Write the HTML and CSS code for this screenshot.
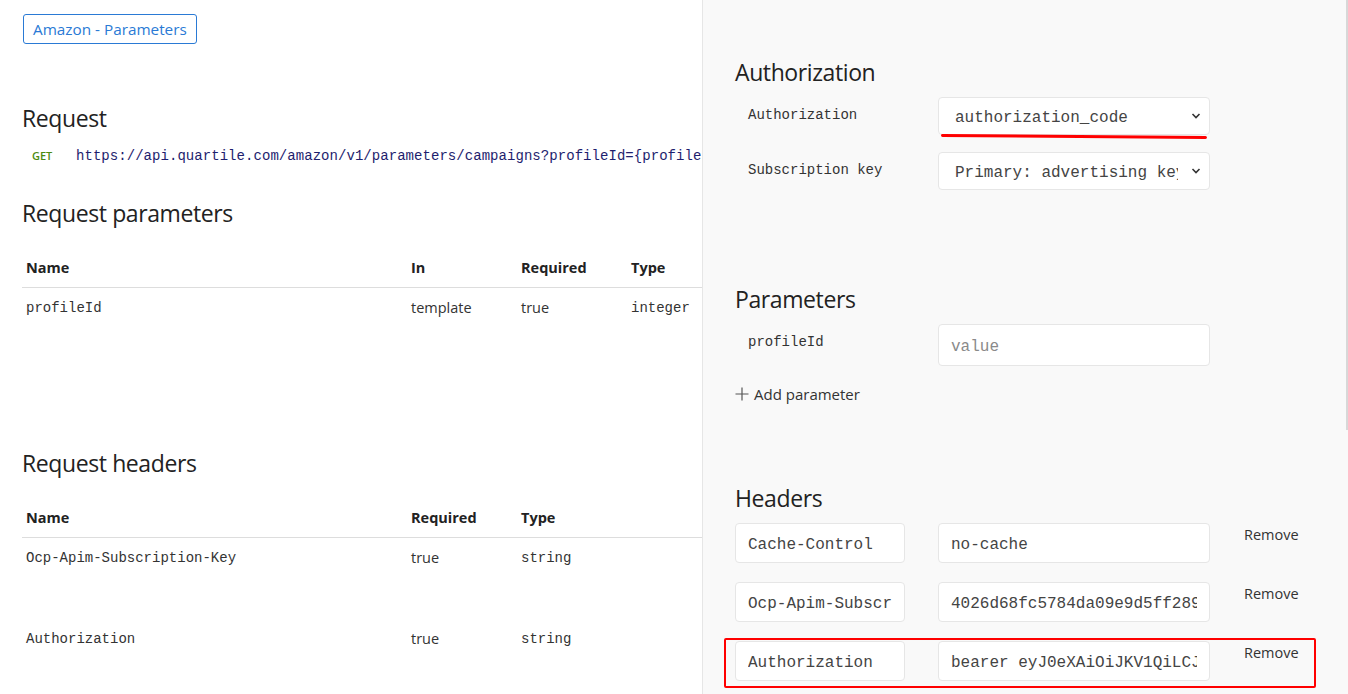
FILE: index.html
```html
<!DOCTYPE html>
<html>
<head>
<meta charset="utf-8">
<link rel="stylesheet" href="styles.css">
</head>
<body>
<div class="page">
  <main class="left">
    <div class="tagbar"><span class="tag">Amazon - Parameters</span></div>
    <h2 class="h2 h-request">Request</h2>
    <div class="urlline"><span class="verb">GET</span><span class="url">https://api.quartile.com/amazon/v1/parameters/campaigns?profileId={profileId}</span></div>
    <h2 class="h2 h-params">Request parameters</h2>
    <table class="tbl tbl-params">
      <thead><tr><th class="c-name">Name</th><th class="c-in">In</th><th class="c-req">Required</th><th>Type</th></tr></thead>
      <tbody><tr><td class="mono">profileId</td><td>template</td><td>true</td><td class="mono">integer</td></tr></tbody>
    </table>
    <h2 class="h2 h-headers">Request headers</h2>
    <table class="tbl tbl-headers">
      <thead><tr><th class="c-name">Name</th><th class="c-req">Required</th><th>Type</th></tr></thead>
      <tbody>
        <tr><td class="mono">Ocp-Apim-Subscription-Key</td><td>true</td><td class="mono">string</td></tr>
        <tr><td class="mono">Authorization</td><td>true</td><td class="mono">string</td></tr>
      </tbody>
    </table>
  </main>
  <aside class="right">
    <h2 class="h2 rh-auth">Authorization</h2>
    <div class="frow">
      <div class="flabel">Authorization</div>
      <div class="select underlined"><span class="sval">authorization_code</span><svg class="chev" width="10" height="8" viewBox="0 0 10 8"><path d="M1.5 2 L5 5.5 L8.5 2" fill="none" stroke="#333" stroke-width="1.6"/></svg><span class="redline"></span></div>
    </div>
    <div class="frow frow2">
      <div class="flabel">Subscription key</div>
      <div class="select"><span class="sval">Primary: advertising key</span><svg class="chev" width="10" height="8" viewBox="0 0 10 8"><path d="M1.5 2 L5 5.5 L8.5 2" fill="none" stroke="#333" stroke-width="1.6"/></svg></div>
    </div>
    <h2 class="h2 rh-params">Parameters</h2>
    <div class="frow">
      <div class="flabel">profileId</div>
      <div class="input tall placeholder"><span class="ival">value</span></div>
    </div>
    <div class="addparam"><svg width="14" height="14" viewBox="0 0 14 14"><path d="M7 0.5 V13.5 M0.5 7 H13.5" stroke="#555" stroke-width="1.2"/></svg><span>Add parameter</span></div>
    <h2 class="h2 rh-headers">Headers</h2>
    <div class="hrow">
      <div class="input hname"><span class="ival">Cache-Control</span></div>
      <div class="input hval"><span class="ival">no-cache</span></div>
      <span class="remove">Remove</span>
    </div>
    <div class="hrow">
      <div class="input hname"><span class="ival">Ocp-Apim-Subscription-Key</span></div>
      <div class="input hval"><span class="ival">4026d68fc5784da09e9d5ff289a1b3c4</span></div>
      <span class="remove">Remove</span>
    </div>
    <div class="hrow boxed">
      <div class="input hname"><span class="ival">Authorization</span></div>
      <div class="input hval"><span class="ival">bearer eyJ0eXAiOiJKV1QiLCJhbGciOiJSUzI1NiJ9</span></div>
      <span class="remove">Remove</span>
    </div>
    <span class="thumb"></span>
  </aside>
</div>
</body>
</html>
```
FILE: styles.css
```css
html, body {
  margin: 0;
  padding: 0;
  background: #fff;
}
body {
  font-family: "Open Sans", "Noto Sans", sans-serif;
  color: #222;
  overflow: hidden;
}
.page {
  display: flex;
  width: 1348px;
  height: 694px;
}
.left {
  width: 702px;
  flex: none;
  overflow: hidden;
  padding-left: 22px;
  box-sizing: border-box;
}
.tagbar {
  padding-top: 14px;
  height: 30px;
}
.tag {
  display: inline-block;
  box-sizing: border-box;
  height: 30px;
  line-height: 28px;
  padding: 0 9px 0 9px;
  margin-left: 1px;
  border: 1px solid #2a7ad5;
  border-radius: 3px;
  color: #2a7ad5;
  font-size: 15.3px;
}
.h2 {
  margin: 0;
  font-weight: 400;
  font-size: 23px;
  line-height: 32px;
  color: #222;
  letter-spacing: -0.4px;
}
.h-request { margin-top: 58px; }
.urlline {
  margin-top: 12px;
  height: 20px;
  line-height: 20px;
  display: flex;
  white-space: nowrap;
}
.verb {
  font-size: 11px;
  font-weight: 600;
  color: #4c8a10;
  width: 54px;
  padding-left: 10px;
  box-sizing: border-box;
  flex: none;
}
.url {
  font-family: "Liberation Mono", monospace;
  font-size: 14px;
  color: #1e1e6e;
  letter-spacing: 0.05px;
}
.h-params { margin-top: 31px; }
.tbl {
  border-collapse: collapse;
  width: 900px;
  margin-top: 19px;
  table-layout: fixed;
}
.tbl th {
  text-align: left;
  font-weight: 700;
  font-size: 14.5px;
  line-height: 20px;
  padding: 10px 4px 9px;
  border-bottom: 1px solid #ddd;
  color: #222;
}
.tbl td {
  vertical-align: top;
  font-size: 14.5px;
  line-height: 20px;
  padding: 10px 4px 0;
  height: 71px;
  color: #333;
}
.c-name { width: 377px; }
.c-in { width: 102px; }
.c-req { width: 102px; }
.mono {
  font-family: "Liberation Mono", monospace;
  font-size: 14px !important;
}
.h-headers { margin-top: 78px; }

.right {
  flex: 1;
  background: #f9f9f9;
  border-left: 1px solid #e6e6e6;
  padding-left: 32px;
  position: relative;
  overflow: hidden;
}
.rh-auth { margin-top: 56px; }
.rh-params { margin-top: 93px; }
.frow {
  display: flex;
  align-items: flex-start;
  margin-top: 9px;
}
.frow2 { margin-top: 17px; }
.flabel {
  width: 203px;
  flex: none;
  box-sizing: border-box;
  padding-left: 13px;
  padding-top: 8px;
  font-family: "Liberation Mono", monospace;
  font-size: 14px;
  line-height: 20px;
  color: #333;
}
.select, .input {
  box-sizing: border-box;
  background: #fff;
  border: 1px solid #e6e6e6;
  border-radius: 4px;
  font-family: "Liberation Mono", monospace;
  font-size: 16px;
  color: #444;
  white-space: nowrap;
}
.select {
  width: 272px;
  height: 38px;
  display: flex;
  align-items: center;
  padding: 0 8px 0 16px;
  position: relative;
}
.sval {
  flex: 1;
  overflow: hidden;
  white-space: nowrap;
  margin-right: 13px;
  padding-top: 3px;
}
.chev { flex: none; }
.redline {
  position: absolute;
  left: 2px;
  right: 2px;
  top: 37px;
  height: 3px;
  background: #f00;
  border-radius: 2px;
  transform: rotate(0.45deg);
}
.input {
  height: 40px;
  display: flex;
  align-items: center;
  padding: 0 12px;
}
.ival {
  flex: 1;
  overflow: hidden;
  white-space: nowrap;
  padding-top: 3px;
}
.tall { width: 272px; height: 42px; }
.placeholder { color: #8a8a8a; }
.addparam {
  margin-top: 18px;
  display: flex;
  align-items: center;
  gap: 5px;
  font-size: 15px;
  line-height: 20px;
  color: #333;
}
.rh-headers { margin-top: 78px; }
.hrow {
  display: flex;
  align-items: flex-start;
  margin-top: 9px;
  position: relative;
}
.hrow + .hrow { margin-top: 19px; }
.hname { width: 170px; flex: none; margin-right: 33px; }
.hval { width: 272px; flex: none; }
.remove {
  margin-left: 34px;
  margin-top: 2px;
  font-size: 14.5px;
  line-height: 20px;
  color: #333;
}
.boxed::after {
  content: "";
  position: absolute;
  left: -11px;
  top: -3px;
  width: 592px;
  height: 50px;
  box-sizing: border-box;
  border: 2.5px solid #f00;
  border-radius: 2px;
}
.thumb {
  position: absolute;
  right: 0;
  top: 0;
  width: 2px;
  height: 430px;
  background: #d8d8d8;
}
```
